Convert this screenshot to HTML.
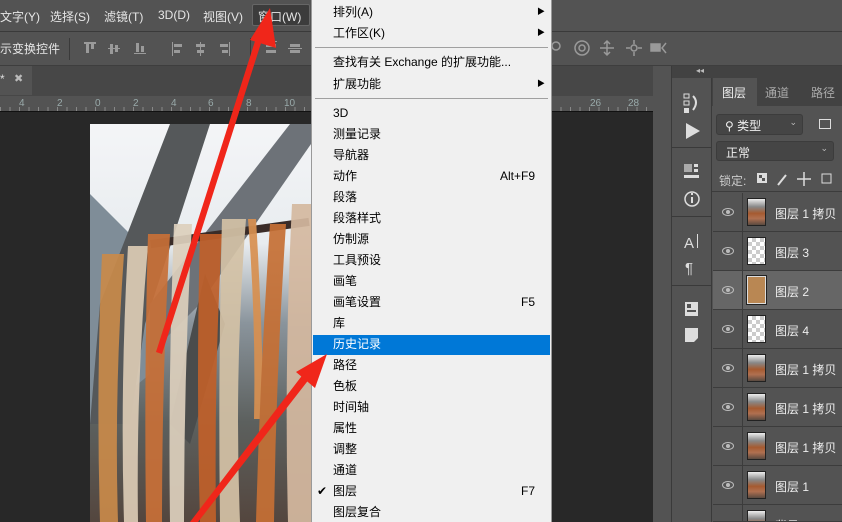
<!DOCTYPE html>
<html><head><meta charset="utf-8"><style>
*{margin:0;padding:0;box-sizing:border-box}
html,body{width:842px;height:522px;overflow:hidden}
body{background:#282828;font-family:"Liberation Sans","Noto Sans CJK SC",sans-serif;position:relative;font-size:12px}
.a{position:absolute}
.mb{left:0;top:0;width:842px;height:32px;background:#535353;border-bottom:1px solid #3a3a3a;color:#e6e6e6;font-size:12px}
.mb span{position:absolute;top:8px}
.ob{left:0;top:32px;width:842px;height:34px;background:#535353;border-bottom:1px solid #3e3e3e;color:#e6e6e6}
.tb{left:0;top:66px;width:653px;height:30px;background:#474747}
.ru{left:0;top:96px;width:653px;height:16px;background:#535353;border-bottom:1px solid #111;color:#9aa;font-size:10px}
.ru span{position:absolute;top:2px}
.menu{left:311px;top:0;width:241px;height:522px;background:#f0f0f0;border-left:1px solid #999;border-right:1px solid #999;font-size:12px;color:#000}
.mi{position:absolute;left:21px;height:21px;line-height:21px;white-space:nowrap}
.sc{position:absolute;right:0}
.sep{position:absolute;left:3px;right:3px;height:1px;background:#a0a0a0}
.row{position:absolute;left:713px;width:129px;height:39px;border-bottom:1px solid #3c3c3c;color:#eee;font-size:12px}
.row .eye{position:absolute;left:9px;top:15px;width:12px;height:8px;border-radius:50%;border:1.5px solid #bbb}
.row .eye:after{content:"";position:absolute;left:2.5px;top:0.5px;width:4px;height:4px;border-radius:50%;background:#bbb}
.row .vl{position:absolute;left:29px;top:0;width:1px;height:39px;background:#3c3c3c}
.row .th{position:absolute;left:34px;top:5px;width:19px;height:28px;border:1px solid #222}
.row .t{position:absolute;left:62px;top:12px}
.photo{background:linear-gradient(180deg,#eee 0,#888 30%,#a55a30 55%,#b07050 75%,#5a4a40)}
.chk{background-color:#fff;background-image:linear-gradient(45deg,#ccc 25%,transparent 25%,transparent 75%,#ccc 75%),linear-gradient(45deg,#ccc 25%,transparent 25%,transparent 75%,#ccc 75%);background-size:8px 8px;background-position:0 0,4px 4px}
</style></head><body>
<div class="a mb">
<span style="left:0">文字(Y)</span><span style="left:50px">选择(S)</span><span style="left:104px">滤镜(T)</span><span style="left:158px">3D(D)</span><span style="left:203px">视图(V)</span>
<div class="a" style="left:252px;top:4px;width:58px;height:22px;background:#3c3c3c;border:1px solid #666;border-radius:2px"></div><span style="left:258px">窗口(W)</span>
</div>
<div class="a ob"><span class="a" style="left:0;top:8px">示变换控件</span>
<div class="a" style="left:69px;top:6px;width:1px;height:22px;background:#3a3a3a"></div>
<svg class="a" style="left:80px;top:6px" width="230" height="22" fill="#9a9a9a"><rect x="4" y="4" width="12" height="2"/><rect x="6" y="6" width="3" height="9"/><rect x="11" y="6" width="3" height="5"/><rect x="30" y="6" width="3" height="10"/><rect x="35" y="7" width="3" height="7"/><rect x="28" y="10" width="12" height="1"/><rect x="56" y="5" width="3" height="9"/><rect x="61" y="8" width="3" height="6"/><rect x="54" y="15" width="12" height="1"/><rect x="92" y="4" width="1" height="14"/><rect x="94" y="6" width="8" height="3"/><rect x="94" y="12" width="6" height="3"/><rect x="120" y="4" width="1" height="14"/><rect x="116" y="6" width="9" height="3"/><rect x="117" y="12" width="7" height="3"/><rect x="149" y="4" width="1" height="14"/><rect x="140" y="6" width="8" height="3"/><rect x="142" y="12" width="6" height="3"/><rect x="170" y="0" width="1" height="22" fill="#3a3a3a"/><rect x="185" y="3" width="12" height="1"/><rect x="186" y="6" width="10" height="3"/><rect x="186" y="12" width="10" height="3"/><rect x="210" y="6" width="10" height="3"/><rect x="210" y="12" width="10" height="3"/><rect x="208" y="10" width="14" height="1"/></svg>
<svg class="a" style="left:550px;top:6px" width="120" height="22" fill="none" stroke="#9a9a9a" stroke-width="1.5"><circle cx="6" cy="8" r="4"/><circle cx="32" cy="10" r="7"/><circle cx="32" cy="10" r="3"/><path d="M57 3v14M50 10h14M54 6l3-3 3 3M54 14l3 3 3-3"/><circle cx="84" cy="10" r="3"/><path d="M84 2v4M84 14v4M76 10h4M88 10h4"/><rect x="101" y="6" width="9" height="7" fill="#9a9a9a"/><path d="M116 5l-4 5 4 5"/></svg>
</div>
<div class="a tb"><div class="a" style="left:0;top:0;width:32px;height:29px;background:#535353;color:#ddd;font-size:12px"><span class="a" style="left:0;top:6px">*</span><span class="a" style="left:14px;top:6px;font-size:11px;color:#bbb">✖</span></div></div>
<div class="a ru">
<span style="left:19px">4</span><span style="left:57px">2</span><span style="left:95px">0</span><span style="left:133px">2</span><span style="left:171px">4</span><span style="left:208px">6</span><span style="left:246px">8</span><span style="left:284px">10</span><span style="left:590px">26</span><span style="left:628px">28</span>
<div class="a" style="left:0;bottom:0;width:653px;height:4px;background:repeating-linear-gradient(90deg,#888 0 1px,transparent 1px 9.5px)"></div>
</div>
<div class="a" style="left:653px;top:66px;width:19px;height:456px;background:#535353;border-right:1px solid #3a3a3a"></div>
<!-- photo -->
<svg class="a" style="left:90px;top:124px" width="221" height="398">
<defs><linearGradient id="g" x1="0" y1="0" x2="0" y2="1"><stop offset="0" stop-color="#f4f5f7"/><stop offset="0.3" stop-color="#e8ecef"/><stop offset="0.5" stop-color="#8a949c"/><stop offset="0.75" stop-color="#5c605e"/><stop offset="1" stop-color="#54463e"/></linearGradient></defs>
<rect width="221" height="398" fill="url(#g)"/>
<polygon points="0,70 40,110 60,250 0,300" fill="#7f8d98"/>
<polygon points="0,300 10,180 80,0 120,0 55,200 40,300" fill="#55585a"/>
<polygon points="60,230 60,180 200,0 221,0 221,20 110,180" fill="#6d7278"/>
<polygon points="80,300 115,150 135,200 100,320" fill="#4a4c4c"/>
<polygon points="60,100 221,200 221,214 60,112" fill="#3a2c28" transform="rotate(-40 140 150)" opacity="0"/>
<polygon points="70,310 221,200 221,212 70,322" fill="#3a2c28" opacity="0"/>
<polygon points="65,304 221,196 221,208 65,316" fill="none"/>
<rect x="60" y="105" width="160" height="8" fill="#3a2c28" transform="rotate(-8 140 110)"/>
<g opacity="0.92">
<path d="M12 130 q-6 130 -2 268 h18 q-4 -130 6 -268z" fill="#c98a4a"/>
<path d="M38 122 q-8 140 -4 276 h14 q-2 -140 10 -276z" fill="#dccbb5"/>
<path d="M58 110 q-4 140 -2 288 h16 q0 -150 8 -288z" fill="#c87038"/>
<path d="M84 100 q-6 150 -4 298 h14 q0 -150 8 -298z" fill="#ddd0bd"/>
<path d="M110 110 q-4 140 0 288 h16 q-2 -150 6 -288z" fill="#c0602a"/>
<path d="M132 95 q-4 150 -2 303 h20 q-6 -150 6 -303z" fill="#d4c2a6"/>
<path d="M158 95 q8 100 6 200 l10 0 q-2 -100 -8 -200z" fill="#d89050"/>
<path d="M180 100 q-10 150 -14 298 h18 q2 -150 12 -298z" fill="#c67035"/>
<path d="M202 80 q-8 160 -4 318 h23 v-318z" fill="#d5b9a0"/>
</g>
</svg>
<!-- menu -->
<div class="a menu">
<div class="mi" style="top:2px">排列(A)</div><div class="a" style="right:6px;top:6px;font-size:8px">▶</div>
<div class="mi" style="top:23px">工作区(K)</div><div class="a" style="right:6px;top:27px;font-size:8px">▶</div>
<div class="sep" style="top:47px"></div>
<div class="mi" style="top:52px">查找有关 Exchange 的扩展功能...</div>
<div class="mi" style="top:74px">扩展功能</div><div class="a" style="right:6px;top:78px;font-size:8px">▶</div>
<div class="sep" style="top:98px"></div>
<div class="mi" style="top:103px">3D</div>
<div class="mi" style="top:124px">测量记录</div>
<div class="mi" style="top:145px">导航器</div>
<div class="mi" style="top:166px;right:16px">动作<span class="sc">Alt+F9</span></div>
<div class="mi" style="top:187px">段落</div>
<div class="mi" style="top:208px">段落样式</div>
<div class="mi" style="top:229px">仿制源</div>
<div class="mi" style="top:250px">工具预设</div>
<div class="mi" style="top:271px">画笔</div>
<div class="mi" style="top:292px;right:16px">画笔设置<span class="sc">F5</span></div>
<div class="mi" style="top:313px">库</div>
<div class="a" style="left:1px;top:335px;width:237px;height:20px;background:#0078d7"></div>
<div class="mi" style="top:334px;color:#fff">历史记录</div>
<div class="mi" style="top:355px">路径</div>
<div class="mi" style="top:376px">色板</div>
<div class="mi" style="top:397px">时间轴</div>
<div class="mi" style="top:418px">属性</div>
<div class="mi" style="top:439px">调整</div>
<div class="mi" style="top:460px">通道</div>
<div class="a" style="left:5px;top:481px;line-height:21px">✔</div>
<div class="mi" style="top:481px;right:16px">图层<span class="sc">F7</span></div>
<div class="mi" style="top:502px">图层复合</div>
</div>
<!-- arrows -->
<svg class="a" style="left:0;top:0" width="842" height="522"><g fill="#f0261a"><polygon points="156,352 162,354 262,40 256,38"/><polygon points="270,8 276,48 250,40"/><polygon points="190,522 198,522 310,378 304,373"/><polygon points="327,354 296,372 315,388"/></g></svg>
<!-- panel strip -->
<div class="a" style="left:672px;top:66px;width:170px;height:12px;background:#424242;color:#bbb;font-size:8px"><span class="a" style="left:24px;top:0">◂◂</span></div>
<div class="a" style="left:672px;top:78px;width:40px;height:444px;background:#535353;border-right:1px solid #3a3a3a">
<div class="a" style="left:0;top:69px;width:40px;height:1px;background:#3a3a3a"></div>
<div class="a" style="left:0;top:138px;width:40px;height:1px;background:#3a3a3a"></div>
<div class="a" style="left:0;top:207px;width:40px;height:1px;background:#3a3a3a"></div>
<svg class="a" style="left:0;top:0" width="40" height="300" fill="#ddd"><rect x="12" y="16" width="5" height="4" fill="none" stroke="#ddd"/><rect x="12" y="23" width="5" height="4" fill="none" stroke="#ddd"/><rect x="12" y="30" width="5" height="5"/><path d="M21 18 q6 6 0 14" stroke="#ddd" fill="none" stroke-width="2"/><polygon points="14,45 28,53 14,61"/><rect x="12" y="86" width="8" height="8" fill="#aaa"/><rect x="22" y="86" width="4" height="3"/><rect x="22" y="91" width="4" height="3"/><rect x="12" y="97" width="15" height="3"/><circle cx="20" cy="121" r="7" fill="none" stroke="#ddd" stroke-width="1.5"/><rect x="19" y="119" width="2" height="6"/><rect x="19" y="115" width="2" height="2"/><text x="12" y="170" font-size="15" fill="#ddd" font-family="Liberation Sans">A</text><rect x="25" y="156" width="1" height="14"/><text x="13" y="195" font-size="15" fill="#ddd" font-family="Liberation Sans">¶</text><rect x="13" y="224" width="13" height="14"/><rect x="15" y="226" width="4" height="4" fill="#535353"/><rect x="15" y="232" width="9" height="2" fill="#535353"/><polygon points="13,250 26,250 26,260 22,264 13,264"/></svg>
</div>
<!-- layers panel -->
<div class="a" style="left:712px;top:78px;width:130px;height:444px;background:#535353">
<div class="a" style="left:0;top:0;width:130px;height:28px;background:#424242"></div>
<div class="a" style="left:1px;top:0;width:44px;height:29px;background:#535353;color:#eee;padding:6px 0 0 9px">图层</div>
<div class="a" style="left:53px;top:6px;color:#aaa">通道</div>
<div class="a" style="left:99px;top:6px;color:#aaa">路径</div>
<div class="a" style="left:4px;top:36px;width:87px;height:21px;border:1px solid #3c3c3c;border-radius:3px;background:#454545;color:#eee;padding:2px 0 0 8px">⚲ 类型<span class="a" style="right:5px;top:2px;font-size:9px;color:#bbb">⌄</span></div>
<div class="a" style="left:107px;top:41px;width:12px;height:10px;border:1px solid #ddd"></div>
<div class="a" style="left:4px;top:63px;width:118px;height:20px;border:1px solid #3c3c3c;border-radius:3px;background:#454545;color:#eee;padding:2px 0 0 9px">正常<span class="a" style="right:5px;top:1px;font-size:9px;color:#bbb">⌄</span></div>
<div class="a" style="left:7px;top:94px;color:#ccc">锁定:</div>
<svg class="a" style="left:44px;top:92px" width="80" height="18" fill="#ddd"><rect x="1" y="3" width="10" height="10"/><rect x="3" y="5" width="3" height="3" fill="#555"/><rect x="6" y="8" width="3" height="3" fill="#555"/><path d="M22 15 l8 -10" stroke="#ddd" stroke-width="2"/><path d="M48 2v14M41 9h14" stroke="#ddd" stroke-width="1.5"/><rect x="66" y="4" width="9" height="9" fill="none" stroke="#ddd"/></svg>
<div class="a" style="left:0;top:113px;width:130px;height:1px;background:#3c3c3c"></div>
</div>
<div class="row" style="top:193px"><div class="eye"></div><div class="vl"></div><div class="th photo"></div><div class="t">图层 1 拷贝</div></div>
<div class="row" style="top:232px"><div class="eye"></div><div class="vl"></div><div class="th chk"></div><div class="t">图层 3</div></div>
<div class="row" style="top:271px;background:#666"><div class="eye"></div><div class="vl"></div><div class="th" style="background:#b98753;border:1px solid #ddd;outline:1px solid #222"></div><div class="t">图层 2</div></div>
<div class="row" style="top:310px"><div class="eye"></div><div class="vl"></div><div class="th chk"></div><div class="t">图层 4</div></div>
<div class="row" style="top:349px"><div class="eye"></div><div class="vl"></div><div class="th photo"></div><div class="t">图层 1 拷贝</div></div>
<div class="row" style="top:388px"><div class="eye"></div><div class="vl"></div><div class="th photo"></div><div class="t">图层 1 拷贝</div></div>
<div class="row" style="top:427px"><div class="eye"></div><div class="vl"></div><div class="th photo"></div><div class="t">图层 1 拷贝</div></div>
<div class="row" style="top:466px"><div class="eye"></div><div class="vl"></div><div class="th photo"></div><div class="t">图层 1</div></div>
<div class="row" style="top:505px;height:17px;overflow:hidden"><div class="vl"></div><div class="th photo"></div><div class="t">背景</div></div>
</body></html>
